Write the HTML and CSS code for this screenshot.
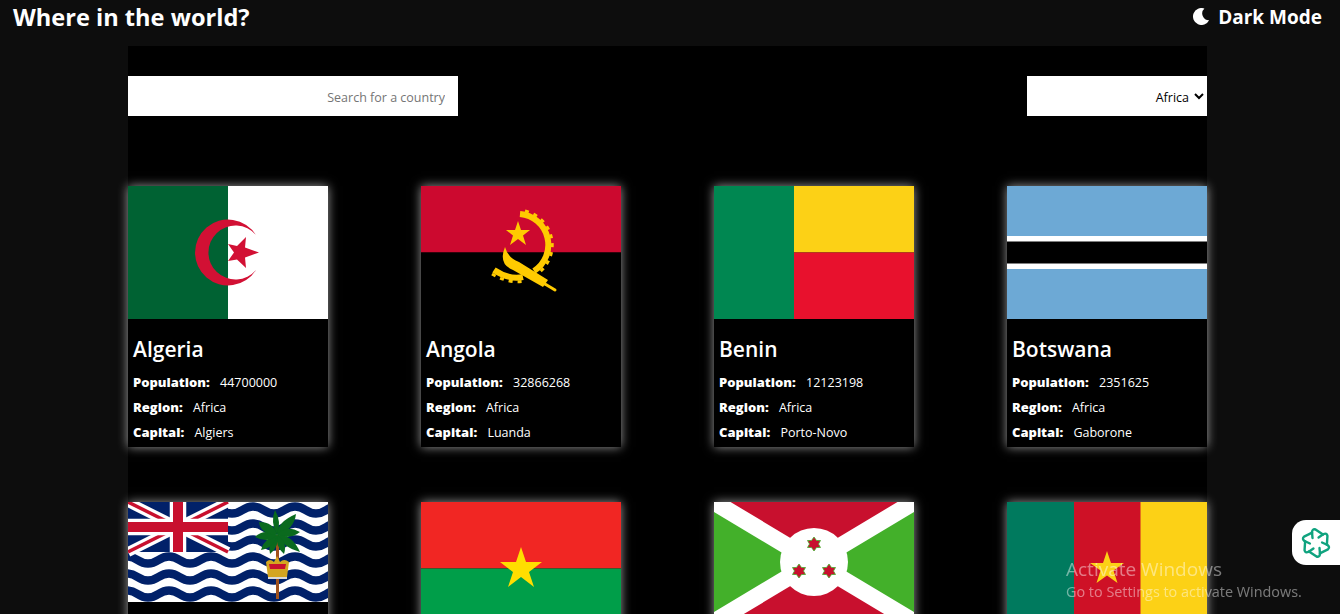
FILE: index.html
```html
<!DOCTYPE html>
<html lang="en">
<head>
    <meta charset="UTF-8">
    <meta name="viewport" content="width=device-width, initial-scale=1.0">
    <title>Where in the world?</title>
    <link rel="stylesheet" href="styles.css">
</head>
<body>

<header class="topbar">
    <h1 class="logo">Where in the world?</h1>
    <div class="mode">
        <svg class="moon" viewBox="0 0 18 18"><path fill="#fff" d="M12.080 .54A9 9 0 1 0 17.060 13A7.200 7.200 0 0 1 12.080 .54Z"/></svg>
        <span>Dark Mode</span>
    </div>
</header>

<main class="content">
    <div class="controls">
        <input class="search" type="text" placeholder="Search for a country">
        <select class="region">
            <option>Africa</option>
            <option>Americas</option>
            <option>Asia</option>
            <option>Europe</option>
            <option>Oceania</option>
        </select>
    </div>

    <div class="countries">
        <article class="card">
            <svg class="flag" viewBox="0 0 200 133">
                <rect width="200" height="133" fill="#fff"/>
                <rect width="100" height="133" fill="#006233"/>
                <path fill="#d21034" d="M128 49A33 33 0 1 0 128 84A27 27 0 1 1 128 49Z"/>
                <polygon fill="#d21034" points="131,66.5 117,71.5 118,82 109,73.500 100,75 106,66.500 100,58 109,60 118,51 117,61.500"/>
            </svg>
            <div class="info">
                <h2>Algeria</h2>
                <p><b>Population:</b> 44700000</p>
                <p><b>Region:</b> Africa</p>
                <p><b>Capital:</b> Algiers</p>
            </div>
        </article>

        <article class="card">
            <svg class="flag" viewBox="0 0 200 133">
                <rect width="200" height="66.500" fill="#cc092f"/>
                <rect y="66.500" width="200" height="66.500" fill="#000"/>
                <polygon fill="#ffcb00" points="97,35 100,44 109,44 102,49.500 105,59 97,53 89,59 92,49.500 85,44 94,44"/>
                <g fill="none" stroke="#ffcb00">
                    <path stroke-width="6" d="M99 28A31 31 0 0 1 113 85"/>
                    <path stroke-width="3" stroke-dasharray="4 5" d="M104 25A35 35 0 0 1 116 88"/>
                    <path stroke-width="6" d="M73 84Q88 94 102 91"/>
                    <path stroke-width="3" stroke-dasharray="4 5" d="M71 88Q88 98 104 95"/>
                </g>
                <path fill="#ffcb00" d="M84 61Q77 78 92 84L122 101L127 94L98 76Q87 72 84 61Z"/>
                <path fill="none" stroke="#ffcb00" stroke-width="3" stroke-linecap="round" d="M124 98L134 104"/>
            </svg>
            <div class="info">
                <h2>Angola</h2>
                <p><b>Population:</b> 32866268</p>
                <p><b>Region:</b> Africa</p>
                <p><b>Capital:</b> Luanda</p>
            </div>
        </article>

        <article class="card">
            <svg class="flag" viewBox="0 0 200 133">
                <rect width="200" height="66.500" fill="#fcd116"/>
                <rect y="66.500" width="200" height="66.500" fill="#e8112d"/>
                <rect width="80" height="133" fill="#008751"/>
            </svg>
            <div class="info">
                <h2>Benin</h2>
                <p><b>Population:</b> 12123198</p>
                <p><b>Region:</b> Africa</p>
                <p><b>Capital:</b> Porto-Novo</p>
            </div>
        </article>

        <article class="card">
            <svg class="flag" viewBox="0 0 200 133">
                <rect width="200" height="133" fill="#6da9d5"/>
                <rect y="50" width="200" height="33" fill="#fff"/>
                <rect y="55.500" width="200" height="22" fill="#000"/>
            </svg>
            <div class="info">
                <h2>Botswana</h2>
                <p><b>Population:</b> 2351625</p>
                <p><b>Region:</b> Africa</p>
                <p><b>Capital:</b> Gaborone</p>
            </div>
        </article>

        <article class="card">
            <svg class="flag flag-short" viewBox="0 0 200 100">
                <rect width="200" height="100" fill="#fff"/>
                <g fill="none" stroke="#012169" stroke-width="8.500">
                    <path d="M-53.500 8q10.500 -7 21 0t21 0t21 0t21 0t21 0t21 0t21 0t21 0t21 0t21 0t21 0t21 0t21 0t21 0"/>
                    <path d="M-53.500 25q10.500 -7 21 0t21 0t21 0t21 0t21 0t21 0t21 0t21 0t21 0t21 0t21 0t21 0t21 0t21 0"/>
                    <path d="M-53.500 41q10.500 -7 21 0t21 0t21 0t21 0t21 0t21 0t21 0t21 0t21 0t21 0t21 0t21 0t21 0t21 0"/>
                    <path d="M-53.500 58q10.500 -7 21 0t21 0t21 0t21 0t21 0t21 0t21 0t21 0t21 0t21 0t21 0t21 0t21 0t21 0"/>
                    <path d="M-53.500 75q10.500 -7 21 0t21 0t21 0t21 0t21 0t21 0t21 0t21 0t21 0t21 0t21 0t21 0t21 0t21 0"/>
                    <path d="M-53.500 92q10.500 -7 21 0t21 0t21 0t21 0t21 0t21 0t21 0t21 0t21 0t21 0t21 0t21 0t21 0t21 0"/>
                </g>
                <rect width="100" height="50" fill="#012169"/>
                <path stroke="#fff" stroke-width="10" d="M0 0L100 50M100 0L0 50"/>
                <path stroke="#c8102e" stroke-width="3.500" d="M0 0L100 50M100 0L0 50"/>
                <path stroke="#fff" stroke-width="16.500" d="M50 0V50M0 25H100"/>
                <path stroke="#c8102e" stroke-width="10" d="M50 0V50M0 25H100"/>
                <rect x="148" y="33" width="3" height="64" fill="#a0521d"/>
                <g fill="#0a6a1e">
                    <path d="M149 33Q142 20 147 8Q154 20 149 33Z"/>
                    <path d="M149 33Q149 20 168 12Q166 28 149 33Z"/>
                    <path d="M149 33Q158 22 172 30Q162 38 149 33Z"/>
                    <path d="M149 33Q164 32 172 50Q156 46 149 33Z"/>
                    <path d="M149 33Q160 40 156 52Q147 44 149 33Z"/>
                    <path d="M149 33Q152 44 142 52Q139 42 149 33Z"/>
                    <path d="M149 33Q146 46 133 48Q136 36 149 33Z"/>
                    <path d="M149 33Q140 42 127 35Q136 26 149 33Z"/>
                    <path d="M149 33Q132 32 131 20Q146 20 149 33Z"/>
                </g>
                <path fill="#d4a520" d="M138 60Q142 56 146 60L149 54L152 60Q156 56 161 60L159 75H140Z"/>
                <path fill="#c8102e" d="M141 62H158L157 67H142Z"/>
                <rect x="140" y="75" width="19" height="2" fill="#d8d8d8"/>
            </svg>
        </article>

        <article class="card">
            <svg class="flag" viewBox="0 0 200 133">
                <rect width="200" height="66.500" fill="#f12623"/>
                <rect y="66.500" width="200" height="66.500" fill="#009e49"/>
                <polygon fill="#ffde00" points="100,45 105,60 121,60 108,70 113,85 100,75 87,85 92,70 79,60 95,60"/>
            </svg>
        </article>

        <article class="card">
            <svg class="flag flag-wide" viewBox="0 0 200 120">
                <rect width="200" height="120" fill="#c8102e"/>
                <polygon fill="#43b02a" points="0,0 100,60 0,120"/>
                <polygon fill="#43b02a" points="200,0 100,60 200,120"/>
                <path stroke="#fff" stroke-width="17" d="M0 0L200 120M200 0L0 120"/>
                <circle cx="100" cy="60" r="34" fill="#fff"/>
                <g fill="#c8102e" stroke="#43b02a" stroke-width="0.800">
                    <polygon points="100,35 102.500,38.500 106.500,38.500 104.500,42 106.500,45.500 102.500,45.500 100,49 97.500,45.500 93.500,45.500 95.500,42 93.500,38.500 97.500,38.500"/>
                    <polygon points="85,62 87.500,65.500 91.500,65.500 89.500,69 91.500,72.500 87.500,72.500 85,76 82.500,72.500 78.500,72.500 80.500,69 78.500,65.500 82.500,65.500"/>
                    <polygon points="115,62 117.500,65.500 121.500,65.500 119.500,69 121.500,72.500 117.500,72.500 115,76 112.500,72.500 108.500,72.500 110.500,69 108.500,65.500 112.500,65.500"/>
                </g>
            </svg>
        </article>

        <article class="card">
            <svg class="flag" viewBox="0 0 200 133">
                <rect width="200" height="133" fill="#ce1126"/>
                <rect width="67" height="133" fill="#007a5e"/>
                <rect x="133.500" width="66.500" height="133" fill="#fcd116"/>
                <polygon fill="#fcd116" points="100,49 104,61 117,61 106.500,68.500 110.500,81 100,73.500 89.500,81 93.500,68.500 83,61 96,61"/>
            </svg>
        </article>
    </div>
</main>

<div class="side-tab">
    <svg viewBox="0 0 32 32" width="32" height="34" fill="none" stroke="#10a37f" stroke-width="2.400" stroke-linejoin="round" stroke-linecap="round">
        <path d="M12.500 11L12 5Q12.500 1.500 15.500 2.500L23 7.500"/>
        <path d="M12.500 11L12 5Q12.500 1.500 15.500 2.500L23 7.500" transform="rotate(60 16 16)"/>
        <path d="M12.500 11L12 5Q12.500 1.500 15.500 2.500L23 7.500" transform="rotate(120 16 16)"/>
        <path d="M12.500 11L12 5Q12.500 1.500 15.500 2.500L23 7.500" transform="rotate(180 16 16)"/>
        <path d="M12.500 11L12 5Q12.500 1.500 15.500 2.500L23 7.500" transform="rotate(240 16 16)"/>
        <path d="M12.500 11L12 5Q12.500 1.500 15.500 2.500L23 7.500" transform="rotate(300 16 16)"/>
    </svg>
</div>

<div class="activate">
    <p class="activate-title">Activate Windows</p>
    <p class="activate-sub">Go to Settings to activate Windows.</p>
</div>

</body>
</html>
```

FILE: styles.css
```css
html, body {
    height: 100%;
    overflow: hidden;
}
body {
    margin: 0;
    background-color: #0d0d0d;
    color: white;
    font-family: "Open Sans", "Noto Sans", Arial, sans-serif;
}
.topbar {
    display: flex;
    justify-content: space-between;
    align-items: flex-start;
    height: 46px;
    padding: 0 18px 0 13px;
}
.logo {
    margin: 0;
    font-size: 23.600px;
    line-height: 34px;
    font-weight: 700;
}
.mode {
    display: flex;
    align-items: center;
    gap: 8px;
    height: 33px;
    font-size: 19px;
    font-weight: 700;
}
.moon {
    width: 17px;
    height: 17px;
}
.content {
    width: 1079px;
    margin: 0 0 0 128px;
    padding: 30px 0 0;
    background: black;
}
.controls {
    display: flex;
    justify-content: space-between;
}
.search, .region {
    height: 40px;
    border: none;
    border-radius: 0;
    background: white;
    font-family: "Open Sans", "Noto Sans", Arial, sans-serif;
    font-size: 12.500px;
}
.search {
    box-sizing: border-box;
    width: 330px;
    padding: 2px 13px 0;
    text-align: right;
}
.search::placeholder {
    color: #757575;
}
.region {
    width: 180px;
    padding: 2px 2px 0 0;
    color: black;
    text-align: right;
    text-align-last: right;
}
.countries {
    display: grid;
    grid-template-columns: repeat(4, 200px);
    justify-content: space-between;
    row-gap: 55px;
    margin-top: 70px;
}
.card {
    height: 261px;
    background: black;
    box-shadow: 0 0 10px rgba(255, 255, 255, 0.6);
}
.flag {
    display: block;
    width: 200px;
    height: 133px;
}
.flag-short {
    height: 100px;
}
.flag-wide {
    height: 120px;
}
.info {
    padding: 14px 5px 0;
}
.info h2 {
    margin: 0 0 5px;
    font-size: 21px;
    line-height: 32px;
    font-weight: 600;
}
.info p {
    margin: 0;
    font-size: 12.500px;
    line-height: 25px;
}
.info b {
    margin-right: 7px;
    font-size: 13px;
    font-weight: 800;
}
.side-tab {
    position: fixed;
    top: 520px;
    right: 0;
    display: flex;
    align-items: center;
    justify-content: center;
    width: 48px;
    height: 45px;
    background: white;
    border-radius: 14px 0 0 14px;
}
.activate {
    position: fixed;
    top: 557px;
    left: 1066px;
    color: rgba(255, 255, 255, 0.45);
    pointer-events: none;
}
.activate p {
    margin: 0;
    white-space: nowrap;
}
.activate-title {
    font-size: 19px;
    line-height: 24px;
}
.activate-sub {
    font-size: 14.400px;
    line-height: 22px;
}
```
